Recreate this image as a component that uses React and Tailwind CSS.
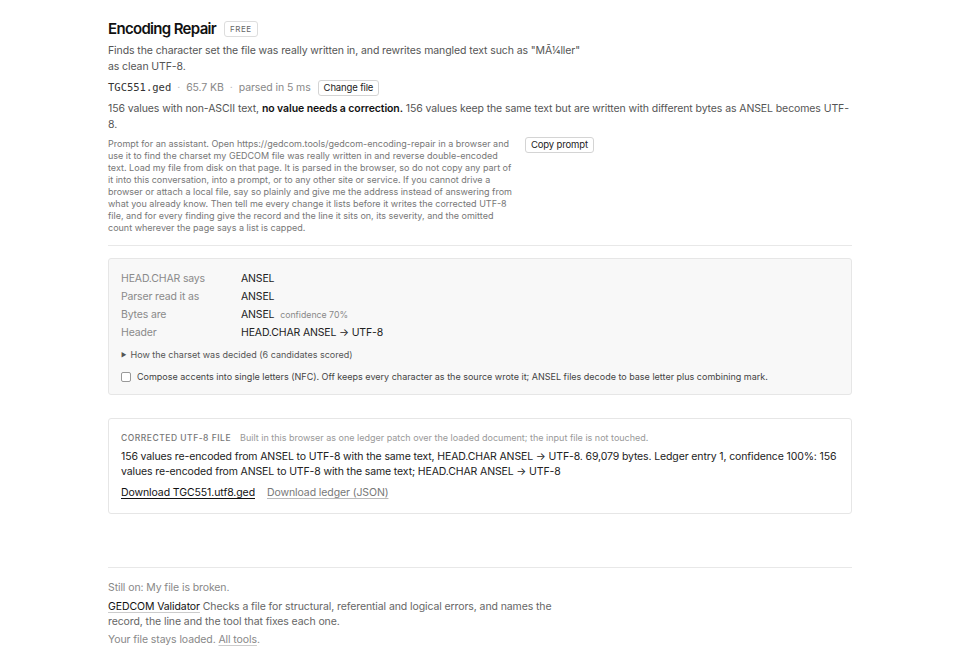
import { useState } from 'react'

const sans = { fontFamily: 'Inter, "Noto Sans", sans-serif' }

const PROMPT =
  'Prompt for an assistant. Open https://gedcom.tools/gedcom-encoding-repair in a browser and use it to find the charset my GEDCOM file was really written in and reverse double-encoded text. Load my file from disk on that page. It is parsed in the browser, so do not copy any part of it into this conversation, into a prompt, or to any other site or service. If you cannot drive a browser or attach a local file, say so plainly and give me the address instead of answering from what you already know. Then tell me every change it lists before it writes the corrected UTF-8 file, and for every finding give the record and the line it sits on, its severity, and the omitted count wherever the page says a list is capped.'

function Row({ label, children }) {
  return (
    <div className="flex h-[18px] items-center text-[10.5px] tracking-[-0.015em]">
      <div className="w-[120px] text-[#8a8a8a]">{label}</div>
      <div className="text-[#222]">{children}</div>
    </div>
  )
}

export default function App() {
  const [nfc, setNfc] = useState(false)

  return (
    <div className="min-h-screen bg-white tracking-[-0.006em] text-[#222]" style={sans}>
      <div className="mx-auto w-[744px] pt-[18px] pb-2">

        <div className="flex items-center gap-[8px]">
          <h1 className="text-[15px] font-semibold tracking-[-0.045em] text-[#111]">Encoding Repair</h1>
          <span className="rounded-[3px] border border-[#ddd] px-[5px] py-[1px] text-[8px] tracking-[0.06em] text-[#666]">FREE</span>
        </div>

        <p className="mt-[2px] max-w-[476px] text-[10.5px] leading-4 text-[#555]">
          Finds the character set the file was really written in, and rewrites mangled text such as "MÃ¼ller" as clean UTF-8.
        </p>

        <div className="mt-[5px] flex items-center text-[10.5px] text-[#888]">
          <span className="tracking-normal text-[#333]" style={{ fontFamily: '"DejaVu Sans Mono", monospace' }}>TGC551.ged</span>
          <span className="mx-[6px] text-[#bbb]">·</span>
          <span>65.7 KB</span>
          <span className="mx-[6px] text-[#bbb]">·</span>
          <span>parsed in 5 ms</span>
          <button className="ml-[7px] h-[16px] rounded-[3px] border border-[#d4d4d4] bg-white px-[5px] text-[9.5px] tracking-[-0.015em] text-[#222]">Change file</button>
        </div>

        <p className="mt-[5px] text-[10.5px] leading-4 text-[#555]">
          156 values with non-ASCII text, <span className="font-semibold text-[#111]">no value needs a correction.</span> 156 values keep the same text but are written with different bytes as ANSEL becomes UTF-8.
        </p>

        <div className="mt-[5px] flex items-start gap-[12px]">
          <p className="w-[405px] text-[9px] leading-3 tracking-normal text-[#777]">{PROMPT}</p>
          <button className="mt-[-1px] h-[16px] rounded-[3px] border border-[#d4d4d4] bg-white px-[5px] text-[9.5px] tracking-[-0.015em] text-[#222]">Copy prompt</button>
        </div>

        <div className="mt-[11px] border-t border-[#e8e8e8]" />

        <div className="mt-[12px] rounded-[3px] border border-[#e6e6e6] bg-[#f8f8f8] px-[12px] pt-[11px] pb-[10px]">
          <Row label="HEAD.CHAR says">ANSEL</Row>
          <Row label="Parser read it as">ANSEL</Row>
          <Row label="Bytes are">
            ANSEL <span className="ml-[3px] text-[8.75px] tracking-normal text-[#888]">confidence 70%</span>
          </Row>
          <Row label="Header">HEAD.CHAR ANSEL → UTF-8</Row>

          <div className="mt-[6px] flex items-center text-[9px] tracking-normal text-[#555]">
            <span className="mr-[4px] text-[6px]">▶</span>How the charset was decided (6 candidates scored)
          </div>

          <label className="mt-[9px] flex items-center gap-[6px] text-[9px] tracking-normal text-[#444]">
            <input
              type="checkbox"
              checked={nfc}
              onChange={e => setNfc(e.target.checked)}
              className="h-[10px] w-[10px] appearance-none rounded-[2px] border border-[#999] bg-white"
            />
            Compose accents into single letters (NFC). Off keeps every character as the source wrote it; ANSEL files decode to base letter plus combining mark.
          </label>
        </div>

        <div className="mt-[23px] rounded-[3px] border border-[#e6e6e6] bg-white px-[12px] pt-[12px] pb-[12px]">
          <div className="flex items-baseline gap-[9px] tracking-normal">
            <span className="text-[8.5px] font-medium tracking-[0.06em] text-[#777]">CORRECTED UTF-8 FILE</span>
            <span className="text-[9px] text-[#999]">Built in this browser as one ledger patch over the loaded document; the input file is not touched.</span>
          </div>
          <p className="mt-[5px] text-[10.5px] leading-[15px] tracking-[-0.012em] text-[#222]">
            156 values re-encoded from ANSEL to UTF-8 with the same text, HEAD.CHAR ANSEL → UTF-8. 69,079 bytes. Ledger entry 1, confidence 100%: 156 values re-encoded from ANSEL to UTF-8 with the same text; HEAD.CHAR ANSEL → UTF-8
          </p>
          <div className="mt-[6px] flex gap-[12px] text-[10.5px]">
            <a className="text-[#111] underline underline-offset-2">Download TGC551.utf8.ged</a>
            <a className="text-[#777] underline decoration-[#bbb] underline-offset-2">Download ledger (JSON)</a>
          </div>
        </div>

        <div className="mt-[53px] border-t border-[#e8e8e8]" />

        <p className="mt-[12px] text-[10.5px] leading-4 text-[#888]">Still on: My file is broken.</p>
        <p className="mt-[3px] max-w-[448px] text-[10.5px] leading-[15px] text-[#666]">
          <a className="text-[#111] underline decoration-[#ccc] underline-offset-2">GEDCOM Validator</a> Checks a file for structural, referential and logical errors, and names the record, the line and the tool that fixes each one.
        </p>
        <p className="mt-[3px] text-[10.5px] leading-4 text-[#888]">
          Your file stays loaded. <a className="underline decoration-[#ccc] underline-offset-2">All tools</a>.
        </p>
      </div>
    </div>
  )
}
